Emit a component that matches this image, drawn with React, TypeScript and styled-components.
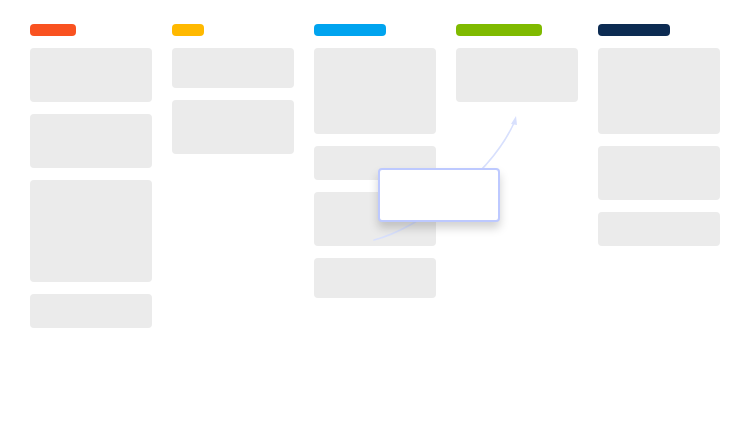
import { FC } from 'react';
import styled, { createGlobalStyle } from 'styled-components';

const GlobalStyle = createGlobalStyle`
    html, body {
        margin: 0;
        padding: 0;
        background: #ffffff;
        font-family: 'Liberation Sans', Arial, sans-serif;
    }
`;

// - - - - - - STYLED-COMPONENTS

const Board = styled.div`
    position: relative;
    width: 750px;
    height: 434px;
    box-sizing: border-box;
    padding: 24px 30px;
    display: flex;
    gap: 20px;
    align-items: flex-start;
`;

const Column = styled.div`
    width: 122px;
    display: flex;
    flex-direction: column;
    gap: 12px;
`;

const Label = styled.div<{ $color: string; $width: number }>`
    width: ${(p) => p.$width}px;
    height: 12px;
    border-radius: 4px;
    background: ${(p) => p.$color};
`;

const Card = styled.div<{ $h: number }>`
    height: ${(p) => p.$h}px;
    border-radius: 4px;
    background: #ebebeb;
`;

const Trail = styled.svg`
    position: absolute;
    left: 0;
    top: 0;
    pointer-events: none;
`;

const DragCard = styled.div`
    position: absolute;
    left: 378px;
    top: 168px;
    width: 122px;
    height: 54px;
    box-sizing: border-box;
    border: 2px solid #bdc9ff;
    border-radius: 4px;
    background: #ffffff;
    box-shadow: 0 6px 10px rgba(0, 0, 0, 0.18);
`;

// - - - - - - - - - - - - - - -

const columns = [
    { color: '#f95220', width: 46, cards: [54, 54, 102, 34] },
    { color: '#ffb900', width: 32, cards: [40, 54] },
    { color: '#00a4ef', width: 72, cards: [86, 34, 54, 40] },
    { color: '#7fba00', width: 86, cards: [54] },
    { color: '#0c2b52', width: 72, cards: [86, 54, 34] },
];

const App: FC = () => {
    return (
        <>
            <GlobalStyle />
            <Board>
                {columns.map((col, i) => (
                    <Column key={i}>
                        <Label $color={col.color} $width={col.width} />
                        {col.cards.map((h, j) => (
                            <Card key={j} $h={h} />
                        ))}
                    </Column>
                ))}
                <Trail width="750" height="434" viewBox="0 0 750 434">
                    <path
                        d="M374 240 C 420 228, 490 175, 514 123"
                        fill="none"
                        stroke="#d8e0fd"
                        strokeWidth="1.6"
                        strokeLinecap="round"
                    />
                    <path d="M516 116 L511 124 L517 125 Z" fill="#d8e0fd" />
                </Trail>
                <DragCard />
            </Board>
        </>
    );
};

export default App;
